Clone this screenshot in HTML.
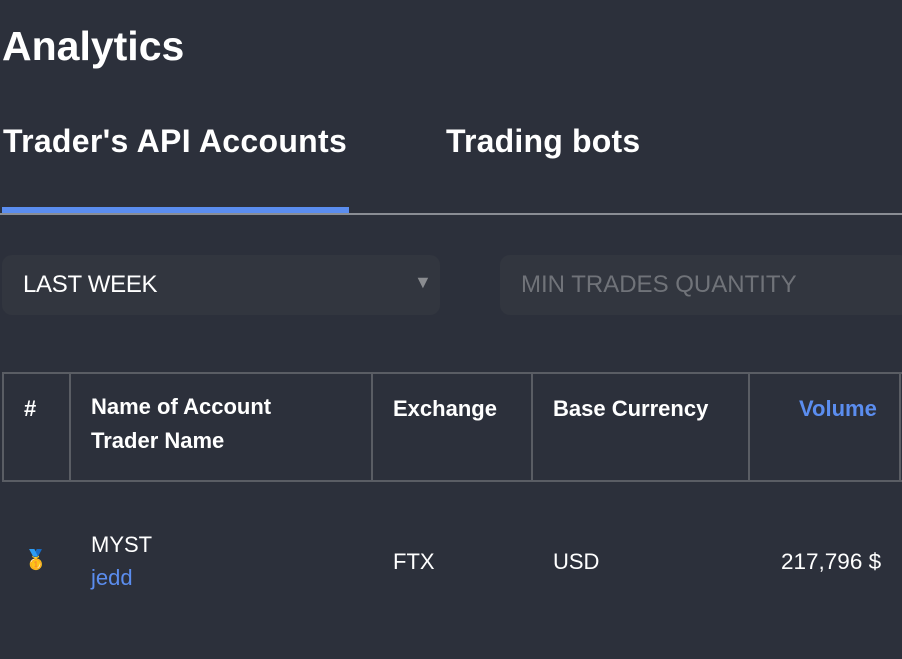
<!DOCTYPE html>
<html><head><style>
body{margin:0;background:#2c303b;width:902px;height:659px;overflow:hidden;font-family:"Liberation Sans",sans-serif;color:#fff;position:relative}
.a{position:absolute;white-space:nowrap}
.h{font-weight:bold}
</style></head><body>
<div class="a h" style="left:2px;top:23px;font-size:41px">Analytics</div>
<div class="a h" style="left:3px;top:123px;font-size:32px;letter-spacing:0.3px">Trader's API Accounts</div>
<div class="a h" style="left:446px;top:123px;font-size:32px;letter-spacing:0.2px">Trading bots</div>
<div class="a" style="left:0;top:213px;width:902px;height:2px;background:#8a8d94"></div>
<div class="a" style="left:2px;top:207px;width:347px;height:6px;background:#5b8def"></div>
<div class="a" style="left:2px;top:255px;width:438px;height:60px;background:#32363f;border-radius:10px"></div>
<div class="a" style="left:23px;top:271px;font-size:24px;letter-spacing:-0.3px">LAST WEEK</div>
<div class="a" style="left:414px;top:272px;font-size:18px;color:#8a8c90">▼</div>
<div class="a" style="left:500px;top:255px;width:410px;height:60px;background:#32363f;border-radius:10px"></div>
<div class="a" style="left:521px;top:271px;font-size:24px;color:#707379">MIN TRADES QUANTITY</div>
<div class="a" style="left:2px;top:372px;width:900px;height:106px;border:2px solid #5a5d64;border-right:none"></div>
<div class="a" style="left:69px;top:372px;width:2px;height:108px;background:#5a5d64"></div>
<div class="a" style="left:371px;top:372px;width:2px;height:108px;background:#5a5d64"></div>
<div class="a" style="left:531px;top:372px;width:2px;height:108px;background:#5a5d64"></div>
<div class="a" style="left:748px;top:372px;width:2px;height:108px;background:#5a5d64"></div>
<div class="a" style="left:899px;top:372px;width:2px;height:108px;background:#5a5d64"></div>
<div class="a h" style="left:24px;top:396px;font-size:22px">#</div>
<div class="a h" style="left:91px;top:390px;font-size:22px;line-height:34px">Name of Account<br>Trader Name</div>
<div class="a h" style="left:393px;top:396px;font-size:22px">Exchange</div>
<div class="a h" style="left:553px;top:396px;font-size:22px">Base Currency</div>
<div class="a h" style="left:799px;top:396px;font-size:22px;color:#5b8def">Volume</div>
<div class="a" style="left:24px;top:548px;font-size:19px">🥇</div>
<div class="a" style="left:91px;top:532px;font-size:22px">MYST</div>
<div class="a" style="left:91px;top:565px;font-size:22px;color:#5b8def">jedd</div>
<div class="a" style="left:393px;top:549px;font-size:22px">FTX</div>
<div class="a" style="left:553px;top:549px;font-size:22px">USD</div>
<div class="a" style="left:781px;top:549px;font-size:22.5px">217,796 $</div>
</body></html>
